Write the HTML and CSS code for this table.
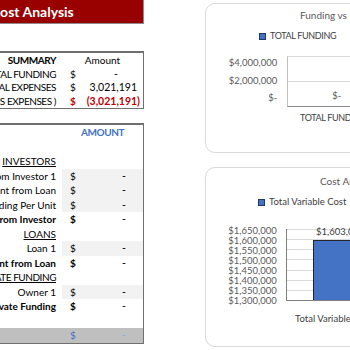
FILE: index.html
```html
<!DOCTYPE html>
<html>
<head>
<meta charset="utf-8">
<link rel="stylesheet" href="styles.css">
</head>
<body>
<div class="left">
  <div class="title">Cost Analysis</div>

  <div class="summary">
    <div class="row">
      <div class="lbl b caps">SUMMARY</div>
      <div class="head">Amount</div>
    </div>
    <div class="row">
      <div class="lbl caps">TOTAL FUNDING</div>
      <div class="cur">$</div>
      <div class="val dash">-</div>
    </div>
    <div class="row">
      <div class="lbl caps">TOTAL EXPENSES</div>
      <div class="cur">$</div>
      <div class="val pos">3,021,191</div>
    </div>
    <div class="row red b">
      <div class="lbl caps">( FUNDING MINUS EXPENSES )</div>
      <div class="cur">$</div>
      <div class="val">(3,021,191)</div>
    </div>
  </div>

  <div class="funding">
    <div class="row">
      <div class="lbl"></div>
      <div class="head blue b caps">AMOUNT</div>
    </div>
    <div class="row"></div>
    <div class="row"><div class="lbl u">INVESTORS</div></div>
    <div class="row shade"><div class="lbl">Funding from Investor 1</div><div class="cur">$</div><div class="val">-</div></div>
    <div class="row shade"><div class="lbl">Investment from Loan</div><div class="cur">$</div><div class="val">-</div></div>
    <div class="row shade"><div class="lbl">Funding Per Unit</div><div class="cur">$</div><div class="val">-</div></div>
    <div class="row"><div class="lbl b">Total Funding from Investor</div><div class="cur b">$</div><div class="val">-</div></div>
    <div class="row"><div class="lbl u">LOANS</div></div>
    <div class="row shade"><div class="lbl">Loan 1</div><div class="cur">$</div><div class="val">-</div></div>
    <div class="row"><div class="lbl b">Total Amount from Loan</div><div class="cur b">$</div><div class="val">-</div></div>
    <div class="row"><div class="lbl u caps">PRIVATE FUNDING</div></div>
    <div class="row shade"><div class="lbl">Owner 1</div><div class="cur">$</div><div class="val">-</div></div>
    <div class="row"><div class="lbl b">Total Private Funding</div><div class="cur b">$</div><div class="val">-</div></div>
    <div class="row"></div>
    <div class="row total"><div class="lbl b">TOTAL FUNDING</div><div class="cur">$</div><div class="val">-</div></div>
  </div>
</div>

<div class="right">
  <div class="card card1">
    <div class="ctitle t1">Funding vs Expenses</div>
    <div class="legend l1"><span class="sw"></span><span class="ccaps">TOTAL FUNDING</span></div>
    <div class="plotrow p1">
      <div class="yaxis y1">
        <span>$4,000,000</span>
        <span>$2,000,000</span>
        <span>$-</span>
      </div>
      <div class="plot plot1">
        <div class="dlabel1">$-</div>
      </div>
    </div>
    <div class="cat c1 ccaps">TOTAL FUNDING</div>
  </div>

  <div class="card card2">
    <div class="ctitle t2">Cost Analysis</div>
    <div class="legend l2"><span class="sw"></span>Total Variable Cost</div>
    <div class="plotrow p2">
      <div class="yaxis y2">
        <span>$1,650,000</span>
        <span>$1,600,000</span>
        <span>$1,550,000</span>
        <span>$1,500,000</span>
        <span>$1,450,000</span>
        <span>$1,400,000</span>
        <span>$1,350,000</span>
        <span>$1,300,000</span>
      </div>
      <div class="plot plot2">
        <div class="barcol">
          <div class="dlabel2">$1,603,030</div>
          <div class="bar"></div>
        </div>
      </div>
    </div>
    <div class="cat c2">Total Variable Cost</div>
  </div>
</div>
</body>
</html>
```

FILE: styles.css
```css
html, body {
  margin: 0;
  padding: 0;
}
body {
  width: 350px;
  height: 350px;
  overflow: hidden;
  background: #fff;
  display: flex;
  align-items: flex-start;
  font-family: "Lato", "Liberation Sans", sans-serif;
  color: #000;
}

/* ---------- left column ---------- */
.left {
  width: 144px;
  flex: none;
  display: flex;
  flex-direction: column;
}
.title {
  height: 23px;
  background: #990000;
  border-right: 1px solid #8c8c8c;
  border-bottom: 1px solid #8c8c8c;
  color: #fff;
  font-weight: 700;
  font-size: 14px;
  line-height: 23px;
  white-space: nowrap;
  text-indent: -9px;
  overflow: hidden;
}

.summary {
  margin-top: 27px;
  border-top: 2px solid #6f6f6f;
  border-right: 1px solid #6f6f6f;
  border-bottom: 1px solid #6f6f6f;
  font-size: 10px;
}
.summary .row {
  height: 13.8px;
}
.row {
  display: grid;
  grid-template-columns: 62px 18px 1fr;
  align-items: center;
  line-height: 12px;
  white-space: nowrap;
}
.lbl {
  display: flex;
  justify-content: flex-end;
  padding-right: 6px;
  min-width: 0;
}
.caps {
  letter-spacing: -0.45px;
}
.head {
  grid-column: 2 / 4;
  text-align: center;
}
.cur {
  padding-left: 8px;
}
.val {
  text-align: right;
  padding-right: 3px;
  font-size: 10.5px;
}
.val.pos { padding-right: 6px; }
.summary .val.dash { padding-right: 25px; }
.b { font-weight: 700; }
.red { color: #c00000; }
.red .lbl { color: #000; font-weight: 400; }
.blue { color: #4472c4; }
.u { text-decoration: underline; }

.funding {
  margin-top: 14px;
  border-top: 2px solid #6f6f6f;
  border-right: 1px solid #6f6f6f;
  border-bottom: 1px solid #6f6f6f;
  font-size: 10px;
}
.funding .row {
  height: 14.5px;
}
.funding .val {
  padding-right: 17px;
}
.shade {
  background: linear-gradient(to right, transparent 62px, #f2f2f2 62px);
}
.total {
  background: #bfbfbf;
  color: #4472c4;
}
.total .lbl { color: #bfbfbf; }
.total .val { color: #8ea9db; }

/* ---------- right column ---------- */
.right {
  margin-left: 61px;
  display: flex;
  flex-direction: column;
  flex: none;
}
.card {
  width: 280px;
  border: 1px solid #d9d9d9;
  border-radius: 10px;
  display: flex;
  flex-direction: column;
  color: #595959;
  font-size: 9.5px;
  line-height: 12px;
  white-space: nowrap;
}
.card1 {
  margin-top: 3px;
  height: 148px;
}
.card2 {
  margin-top: 14px;
  height: 178px;
}
.ctitle {
  font-size: 10px;
}
.ccaps {
  font-size: 9px;
  letter-spacing: -0.35px;
}
.t1 { margin-top: 5px; padding-left: 94px; }
.t2 { margin-top: 7px; padding-left: 114px; }

.legend {
  display: flex;
  align-items: center;
  color: #404040;
}
.sw {
  width: 5px;
  height: 5px;
  background: #4472c4;
  border: 1px solid #1f3864;
  margin-right: 4px;
}
.l1 { margin-top: 9px; padding-left: 53px; }
.l2 { margin-top: 9px; padding-left: 52px; }

.plotrow {
  display: flex;
  align-items: flex-start;
}
.yaxis {
  display: flex;
  flex-direction: column;
  align-items: flex-end;
}
.y1 {
  width: 72px;
  padding-top: 1px;
  gap: 5.5px;
}
.y2 {
  width: 71px;
}
.y2 span { line-height: 10px; }

.p1 { margin-top: 14px; }
.plot1 {
  margin-left: 10px;
  width: 200px;
  height: 49px;
  border-top: 1px solid #d9d9d9;
  border-left: 1px solid #bfbfbf;
  border-bottom: 1px solid #8c8c8c;
  background: linear-gradient(to bottom, transparent 24px, #d9d9d9 24px, #d9d9d9 25px, transparent 25px);
  display: flex;
  align-items: flex-end;
}
.dlabel1 {
  margin-left: 44px;
  margin-bottom: 4px;
}
.c1 { margin-top: 5px; padding-left: 94px; color: #404040; }

.p2 { margin-top: 18px; }
.plot2 {
  margin-left: 9px;
  margin-top: 3px;
  width: 200px;
  height: 71px;
  border-left: 1px solid #7f7f7f;
  border-bottom: 1px solid #7f7f7f;
  background: repeating-linear-gradient(to bottom, #d9d9d9 0, #d9d9d9 1px, transparent 1px, transparent 10.14px);
  display: flex;
  align-items: flex-end;
}
.barcol {
  margin-left: 26px;
  width: 55px;
  display: flex;
  flex-direction: column;
  align-items: center;
}
.dlabel2 {
  line-height: 10px;
  margin-bottom: 3px;
  color: #404040;
}
.bar {
  width: 53px;
  height: 59px;
  background: #4472c4;
  border: 1px solid #262626;
  border-bottom: none;
}
.c2 { margin-top: 7px; padding-left: 89px; color: #404040; }
```
